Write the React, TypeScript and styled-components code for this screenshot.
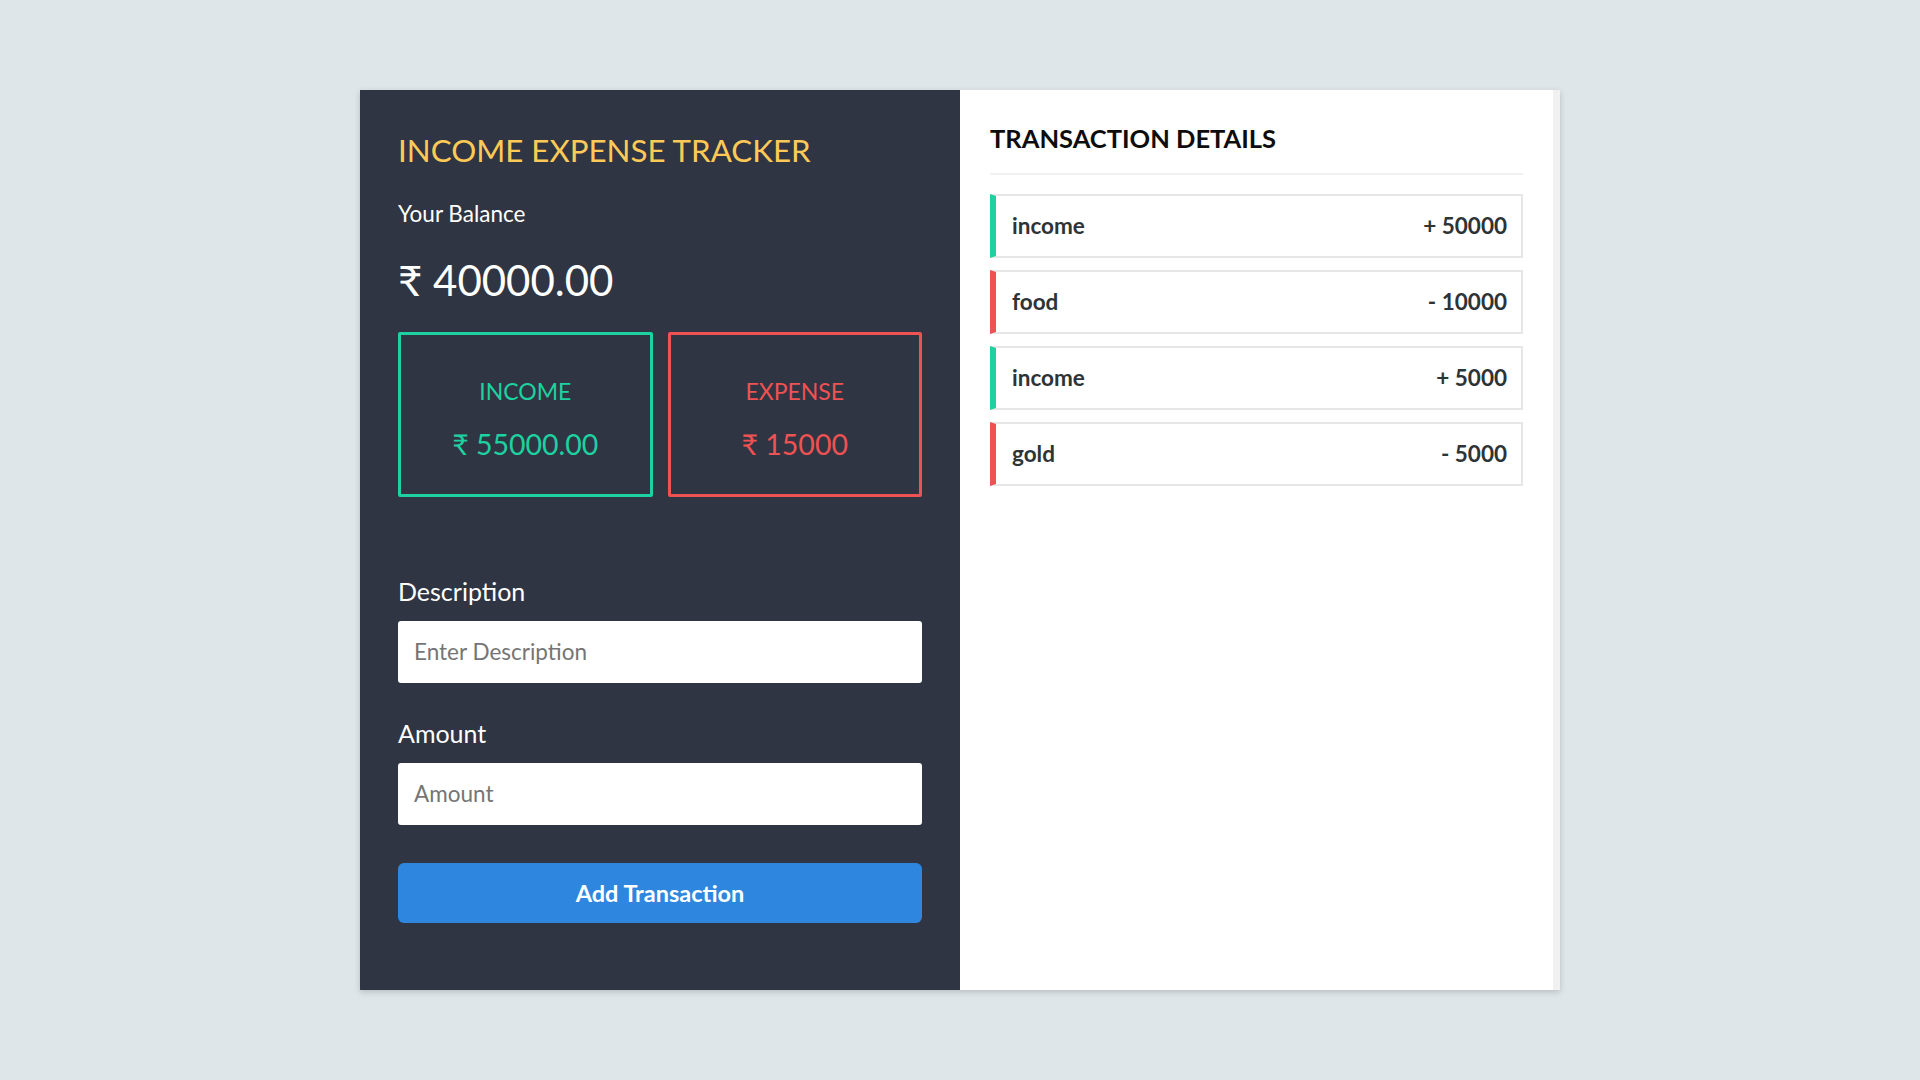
import styled, { createGlobalStyle, css } from "styled-components";

const GlobalStyle = createGlobalStyle`
  * { box-sizing: border-box; }
  html, body { margin: 0; padding: 0; }
  body {
    background: #dfe6e9;
    font-family: Lato, "Noto Sans", sans-serif;
  }
`;

const Page = styled.div`
  height: 1080px;
  display: flex;
  align-items: center;
  justify-content: center;
`;

const Card = styled.div`
  width: 1200px;
  height: 900px;
  display: flex;
  box-shadow: 0 2px 6px rgba(0, 0, 0, 0.18);
`;

const LeftPanel = styled.div`
  width: 600px;
  background: #2f3542;
  padding: 42px 38px 0;
  display: flex;
  flex-direction: column;
`;

const Title = styled.h1`
  margin: 0;
  font-size: 31.3px;
  line-height: 1.2;
  font-weight: 400;
  color: #feca57;
`;

const BalanceLabel = styled.div`
  margin-top: 30px;
  font-size: 22.5px;
  line-height: 1.2;
  color: #ffffff;
`;

const Balance = styled.div`
  margin-top: 28px;
  font-size: 42px;
  line-height: 1.2;
  color: #ffffff;
`;

const Summary = styled.div`
  margin-top: 27px;
  display: grid;
  grid-template-columns: 1fr 1fr;
  gap: 15px;
`;

const SummaryBox = styled.div<{ kind: "income" | "expense" }>`
  height: 165px;
  border: 3px solid;
  border-radius: 2px;
  padding-top: 10px;
  display: flex;
  flex-direction: column;
  align-items: center;
  justify-content: center;
  gap: 21px;
  ${({ kind }) =>
    kind === "income"
      ? css`
          border-color: #1dd1a1;
          color: #1dd1a1;
        `
      : css`
          border-color: #ee5253;
          color: #ee5253;
        `}
`;

const SummaryLabel = styled.div`
  font-size: 23px;
  line-height: 1.2;
`;

const SummaryValue = styled.div`
  font-size: 28.5px;
  line-height: 1.2;
`;

const Form = styled.form`
  margin-top: 79px;
  display: flex;
  flex-direction: column;
`;

const Label = styled.label<{ paddingTop?: number }>`
  font-size: 25px;
  line-height: 1.2;
  color: #ffffff;
  padding-top: ${({ paddingTop }) => (paddingTop ? paddingTop : 0)}px;
  margin-bottom: 15px;
`;

const Input = styled.input`
  height: 62px;
  width: 100%;
  border: none;
  border-radius: 3px;
  padding: 0 16px;
  font-family: Lato, "Noto Sans", sans-serif;
  font-size: 22.5px;
  color: #333;
  background: #ffffff;
  outline: none;
  &::placeholder {
    color: #757575;
  }
`;

const Button = styled.button`
  margin-top: 38px;
  height: 60px;
  border: none;
  border-radius: 6px;
  background: #2e86de;
  color: #ffffff;
  font-family: Lato, "Noto Sans", sans-serif;
  font-size: 23.5px;
  font-weight: 700;
  cursor: pointer;
`;

const RightPanel = styled.div`
  width: 600px;
  background: #ffffff;
  display: flex;
`;

const RightContent = styled.div`
  flex: 1;
  padding: 30px 30px 0;
`;

const ScrollTrack = styled.div`
  width: 7px;
  background: #f1f1f1;
`;

const DetailsHeader = styled.h2`
  margin: 0;
  padding: 3px 0 19px;
  font-size: 25.5px;
  line-height: 1.2;
  font-weight: 700;
  color: #0d0d0d;
  border-bottom: 2px solid #f1f1f1;
`;

const List = styled.ul`
  list-style: none;
  margin: 19px 0 0;
  padding: 0;
  display: flex;
  flex-direction: column;
  gap: 12px;
`;

const Item = styled.li<{ kind: "income" | "expense" }>`
  height: 64px;
  display: flex;
  align-items: center;
  justify-content: space-between;
  padding: 0 14px 0 16px;
  border: 2px solid #e6e6e6;
  border-left: 6px solid ${({ kind }) => (kind === "income" ? "#1dd1a1" : "#ee5253")};
  font-size: 22.5px;
  font-weight: 700;
  color: #2d3436;
`;

const transactions: { name: string; amount: number; kind: "income" | "expense" }[] = [
  { name: "income", amount: 50000, kind: "income" },
  { name: "food", amount: 10000, kind: "expense" },
  { name: "income", amount: 5000, kind: "income" },
  { name: "gold", amount: 5000, kind: "expense" },
];

const App = () => {
  return (
    <>
      <GlobalStyle />
      <Page>
        <Card>
          <LeftPanel>
            <Title>INCOME EXPENSE TRACKER</Title>
            <BalanceLabel>Your Balance</BalanceLabel>
            <Balance>₹ 40000.00</Balance>
            <Summary>
              <SummaryBox kind="income">
                <SummaryLabel>INCOME</SummaryLabel>
                <SummaryValue>₹ 55000.00</SummaryValue>
              </SummaryBox>
              <SummaryBox kind="expense">
                <SummaryLabel>EXPENSE</SummaryLabel>
                <SummaryValue>₹ 15000</SummaryValue>
              </SummaryBox>
            </Summary>
            <Form onSubmit={(e) => e.preventDefault()}>
              <Label htmlFor="desc">Description</Label>
              <Input id="desc" placeholder="Enter Description" />
              <Label htmlFor="amount" paddingTop={35}>
                Amount
              </Label>
              <Input id="amount" placeholder="Amount" />
              <Button type="submit">Add Transaction</Button>
            </Form>
          </LeftPanel>
          <RightPanel>
            <RightContent>
              <DetailsHeader>TRANSACTION DETAILS</DetailsHeader>
              <List>
                {transactions.map((t, i) => (
                  <Item key={i} kind={t.kind}>
                    <span>{t.name}</span>
                    <span>
                      {t.kind === "income" ? "+" : "-"} {t.amount}
                    </span>
                  </Item>
                ))}
              </List>
            </RightContent>
            <ScrollTrack />
          </RightPanel>
        </Card>
      </Page>
    </>
  );
};

export default App;
